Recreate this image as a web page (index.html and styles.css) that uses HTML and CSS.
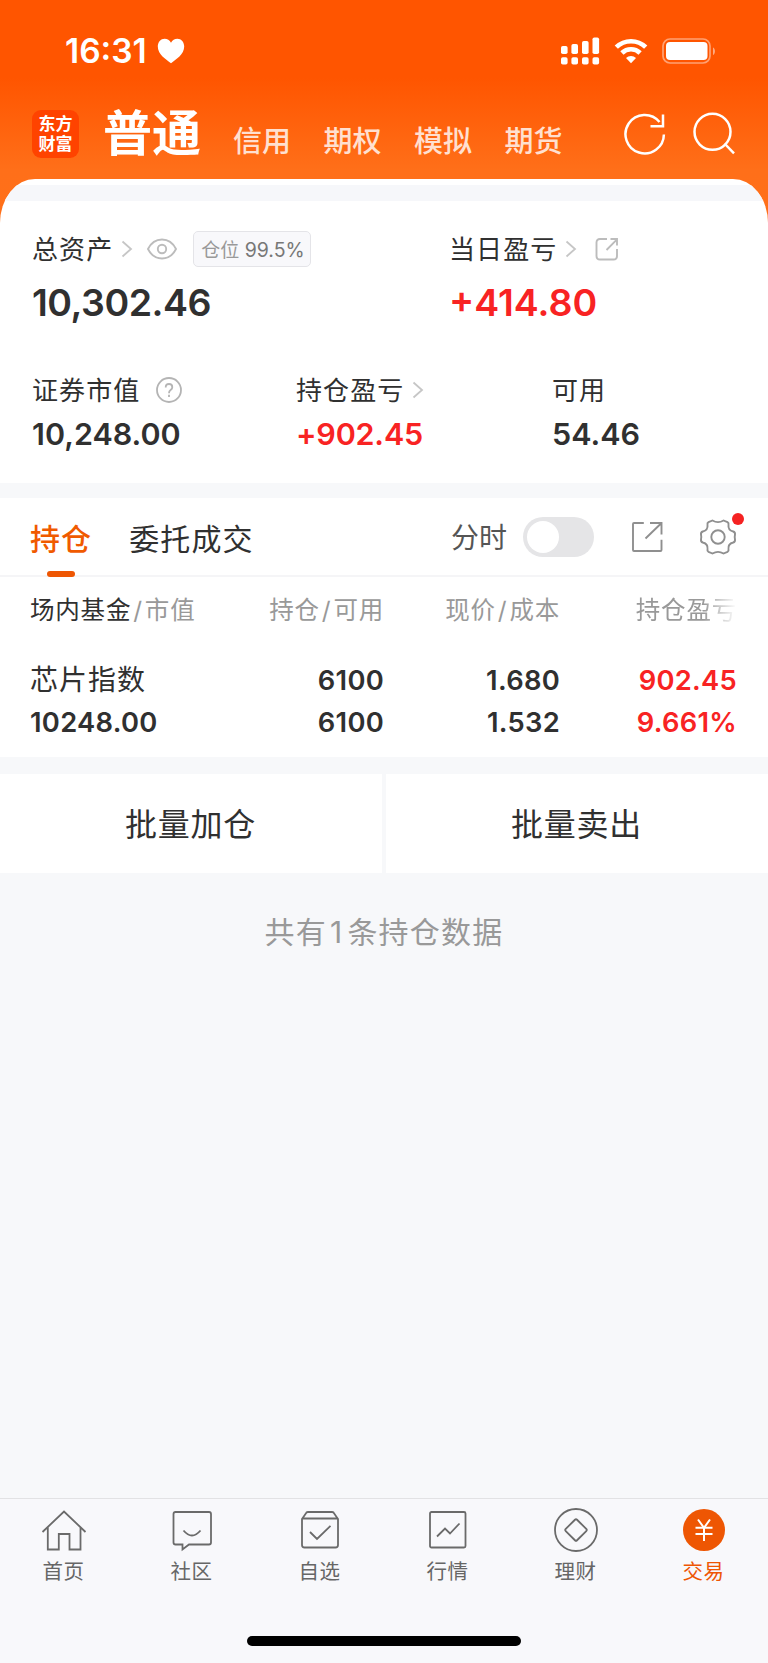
FILE: index.html
```html
<!DOCTYPE html>
<html lang="zh-CN">
<head>
<meta charset="utf-8">
<title>交易</title>
<link rel="stylesheet" href="styles.css">
</head>
<body>
<div class="app">
  <header class="top">
    <div class="status">
      <span class="time">16:31</span>
      <svg class="heart" width="28" height="26" viewBox="0 0 28 26"><path d="M14 25.200C9 21.500 .8 16.500 .8 8.600C.8 4 3.800 .8 7.600 .8C10.300 .8 12.700 2.200 14 4.700C15.300 2.200 17.700 .8 20.400 .8C24.200 .8 27.200 4 27.200 8.600C27.200 16.500 19 21.500 14 25.200Z" fill="#fff"/></svg>
      <span class="spacer"></span>
      <svg class="signal" width="39" height="28" viewBox="0 0 39 28" fill="#fff"><rect x="0" y="9" width="6.600" height="8" rx="1.800"/><rect x="10.400" y="7" width="6.600" height="10" rx="1.800"/><rect x="21" y="4" width="6.600" height="13" rx="1.800"/><rect x="31.500" y="0.500" width="6.600" height="16.500" rx="1.800"/><rect x="0" y="20.300" width="6.600" height="7.200" rx="1.800"/><rect x="10.400" y="20.300" width="6.600" height="7.200" rx="1.800"/><rect x="21" y="20.300" width="6.600" height="7.200" rx="1.800"/><rect x="31.500" y="20.300" width="6.600" height="7.200" rx="1.800"/></svg>
      <svg class="wifi" width="34" height="26" viewBox="0 0 34 26" fill="none" stroke="#fff" stroke-width="4.600"><path d="M2.300 9.200A21 21 0 0 1 31.700 9.200"/><path d="M7.900 15A13 13 0 0 1 26.100 15"/><path d="M17 25.200L12 20A7.200 7.200 0 0 1 22 20Z" fill="#fff" stroke="none"/></svg>
      <svg class="battery" width="54" height="26" viewBox="0 0 54 26"><rect x="1" y="1" width="47" height="24" rx="7" fill="none" stroke="#fff" stroke-opacity=".45" stroke-width="1.700"/><rect x="4" y="4" width="41.500" height="18" rx="4" fill="#fff"/><path d="M51 9.500C53.600 10.500 53.600 16 51 17Z" fill="#fff" fill-opacity=".5"/></svg>
    </div>
    <nav class="accounts">
      <div class="logo"><span>东方</span><span>财富</span></div>
      <span class="account-on">普通</span>
      <div class="account-list"><span>信用</span><span>期权</span><span>模拟</span><span>期货</span></div>
      <span class="spacer"></span>
      <svg class="refresh" width="44" height="44" viewBox="0 0 44 44" fill="none" stroke="#fff" stroke-width="2.500"><path d="M40.900 22.500A19.200 19.200 0 1 1 36.500 10"/><path d="M40 2.500V14.300H27.500"/></svg>
      <svg class="search" width="44" height="44" viewBox="0 0 44 44" fill="none" stroke="#fff" stroke-width="2.500"><circle cx="20.500" cy="19.800" r="18"/><path d="M32.500 31.500L42 41.300"/></svg>
    </nav>
  </header>

  <section class="assets">
    <div class="strip"></div>
    <div class="totals">
      <div class="total-main">
        <div class="label"><span>总资产</span><svg class="chev" width="12" height="18" viewBox="0 0 12 18"><path d="M1.500 1.500L10 9L1.500 16.500"/></svg><svg class="eye" width="30" height="22" viewBox="0 0 30 22"><path d="M1 11C4 5 9 1.500 15 1.500S26 5 29 11C26 17 21 20.500 15 20.500S4 17 1 11Z"/><circle cx="15" cy="11" r="4.200"/></svg><span class="badge">仓位 <b>99.5%</b></span></div>
        <div class="big tight">10,302.46</div>
      </div>
      <div class="total-day">
        <div class="label"><span>当日盈亏</span><svg class="chev" width="12" height="18" viewBox="0 0 12 18"><path d="M1.500 1.500L10 9L1.500 16.500"/></svg><svg class="share-sm" width="24" height="24" viewBox="0 0 24 24"><path d="M12 2H5Q1.500 2 1.500 5.500V19Q1.500 22.500 5 22.500H18.500Q22 22.500 22 19V12M11.500 13L21.500 2.800M15.500 2H22V8.500"/></svg></div>
        <div class="big up">+414.80</div>
      </div>
    </div>
    <div class="details">
      <div class="detail"><div class="label"><span>证券市值</span><svg class="help" width="26" height="26" viewBox="0 0 26 26"><circle cx="13" cy="13" r="12"/><path d="M9.700 10.500Q9.700 7 13 7T16.300 10.200Q16.300 11.800 14.600 13T13 16.300M13 17.800V20"/></svg></div><div class="val">10,248.00</div></div>
      <div class="detail"><div class="label"><span>持仓盈亏</span><svg class="chev" width="12" height="18" viewBox="0 0 12 18"><path d="M1.500 1.500L10 9L1.500 16.500"/></svg></div><div class="val up">+902.45</div></div>
      <div class="detail"><div class="label"><span>可用</span></div><div class="val">54.46</div></div>
    </div>
  </section>

  <section class="holdings">
    <div class="tabs">
      <span class="tab tab-on">持仓</span>
      <span class="tab">委托成交</span>
      <span class="spacer"></span>
      <span class="minute">分时</span>
      <span class="toggle"><i></i></span>
      <svg class="share" width="32" height="32" viewBox="0 0 32 32"><path d="M12.800 2H3Q2 2 2 3V29Q2 30 3 30H29.500Q30.500 30 30.500 29V18.800M14.500 17.500L30 2.500M19 2H30.500V13.500"/></svg>
      <span class="gear"><svg width="38" height="38" viewBox="-19 -19 38 38"><path d="M-5.500 -16.500Q0 -13.200 5.500 -16.500L9.500 -14.800Q11 -14 10.500 -12Q9.800 -7 15.200 -5.500Q17.300 -4.800 17 -2.500Q16.400 0 17 2.500Q17.300 4.800 15.200 5.500Q9.800 7 10.500 12Q11 14 9.500 14.800L5.500 16.500Q0 13.200 -5.500 16.500L-9.500 14.800Q-11 14 -10.500 12Q-9.800 7 -15.200 5.500Q-17.300 4.800 -17 2.500Q-16.400 0 -17 -2.500Q-17.300 -4.800 -15.200 -5.500Q-9.800 -7 -10.500 -12Q-11 -14 -9.500 -14.800Z"/><circle cx="0" cy="0" r="6.700"/></svg><i class="dot"></i></span>
    </div>
    <div class="row head"><span class="c1"><em>场内基金</em><u>/</u>市值</span><span class="c2">持仓<u>/</u>可用</span><span class="c3">现价<u>/</u>成本</span><span class="c4 fade">持仓盈亏</span></div>
    <div class="position">
      <div class="row"><span class="c1 name">芯片指数</span><span class="c2">6100</span><span class="c3">1.680</span><span class="c4 up">902.45</span></div>
      <div class="row"><span class="c1">10248.00</span><span class="c2">6100</span><span class="c3">1.532</span><span class="c4 up">9.661%</span></div>
    </div>
  </section>

  <div class="actions"><div>批量加仓</div><div>批量卖出</div></div>
  <p class="count">共有<span>1</span>条持仓数据</p>

  <footer class="bar">
    <nav class="bar-items">
      <div class="item"><svg width="46" height="46" viewBox="0 0 46 46"><path d="M1.500 25L23 4.500L44.500 25M6.800 20.500V42.500H17.800V27H28.500V42.500H39.500V20.500"/></svg><span>首页</span></div>
      <div class="item"><svg width="46" height="46" viewBox="0 0 46 46"><path d="M6.500 5H40Q42 5 42 7V35.500Q42 37.500 40 37.500H20L13.500 42.500V37.500H6.500Q4.500 37.500 4.500 35.500V7Q4.500 5 6.500 5ZM14.500 23.500Q23 33.500 31.500 23.500"/></svg><span>社区</span></div>
      <div class="item"><svg width="46" height="46" viewBox="0 0 46 46"><path d="M5 12L9.500 5.500Q10 5 11 5H35Q36 5 36.500 5.500L41 12V38Q41 40.500 38.500 40.500H7.500Q5 40.500 5 38ZM5 11.500H41M13 25L20 32L33.500 18.800"/></svg><span>自选</span></div>
      <div class="item"><svg width="46" height="46" viewBox="0 0 46 46"><rect x="5" y="5" width="35.500" height="35.500" rx="1.500"/><path d="M12 29.500L20 21.500L25 26.500L34.500 16.500"/></svg><span>行情</span></div>
      <div class="item"><svg width="46" height="46" viewBox="0 0 46 46"><circle cx="23" cy="23" r="21"/><rect x="15" y="15" width="16" height="16" rx="1.500" transform="rotate(45 23 23)"/></svg><span>理财</span></div>
      <div class="item item-on"><svg width="46" height="46" viewBox="0 0 46 46"><circle cx="23" cy="23" r="21" class="coin"/><path class="yen" d="M17 12.500L23 20.800L29 12.500M14.500 20.800H31.500M14.500 27H31.500M23 20.800V34"/></svg><span>交易</span></div>
    </nav>
    <div class="home"></div>
  </footer>
</div>
</body>
</html>
```

FILE: styles.css
```css
* { box-sizing: border-box; }
body {
  margin: 0;
  width: 768px;
  background: #f7f8fa;
  color: #303030;
  font-family: Inter, "Noto Sans CJK SC", sans-serif;
}
svg { display: block; flex: none; }
.app { height: 1663px; display: flex; flex-direction: column; overflow: hidden; }
.spacer { flex: 1; }
.up { color: #f82323; }

.top {
  flex: none;
  height: 224px;
  background: linear-gradient(#ff5500 0, #ff5500 78px, #ff6f19 170px, #ff7019 100%);
  color: #fff;
}
.status { display: flex; align-items: center; height: 102px; padding: 0 52px 0 65px; }
.time { font-size: 33.5px; font-weight: 600; line-height: 40px; width: 92px; }
.signal { margin-right: 14px; }
.wifi { margin-right: 14px; }
.accounts { display: flex; align-items: center; height: 64px; padding: 0 32px; }
.logo {
  width: 47px; height: 48px; border-radius: 9px; background: #ff4300;
  display: flex; flex-direction: column; align-items: center; justify-content: center;
  font-size: 17px; line-height: 20px; font-weight: 700;
}
.account-on { margin-left: 24px; font-size: 49px; line-height: 60px; font-weight: 600; }
.account-list {
  display: flex; gap: 32.5px; margin-left: 32px; padding-top: 16px;
  font-size: 29px; line-height: 36px; font-weight: 500; color: #ffe0d0;
}
.refresh { margin-right: 25px; }

.assets {
  flex: none;
  height: 304px; margin-top: -45px;
  background: #fff;
  border-radius: 35px 35px 0 0 / 44px 44px 0 0;
  overflow: hidden;
  padding-top: 6px;
}
.strip { height: 16px; background: #f6f7fa; }
.totals { display: flex; padding: 28px 32px 0; }
.total-main { width: 417px; }
.label { display: flex; align-items: center; height: 40px; font-size: 26px; letter-spacing: 1.1px; }
.label > span:first-child { padding-bottom: 3px; }
.chev { margin-left: 8px; fill: none; stroke: #c6c6c6; stroke-width: 1.8; }
.eye { margin-left: 14px; fill: none; stroke: #bcbcbc; stroke-width: 1.9; }
.share-sm { margin-left: 18px; fill: none; stroke: #bcbcbc; stroke-width: 1.9; }
.help { margin-left: 16px; fill: none; stroke: #b4b4b4; stroke-width: 1.8; }
.badge {
  margin-left: 16px; width: 118px; height: 36px; line-height: 36px; padding-left: 7px;
  border: 1px solid #e4e4e8; border-radius: 5px; background: #f8f8fb;
  font-size: 19px; letter-spacing: 0; color: #999; white-space: nowrap;
}
.badge b { font-weight: 400; font-size: 19.5px; color: #777; }
.big { height: 66px; line-height: 68px; font-size: 37.5px; font-weight: 600; }
.tight { letter-spacing: -.5px; }
.details { display: flex; padding: 35px 32px 0; }
.detail { flex: none; width: 264px; }
.detail:nth-child(2) { width: 256px; }
.val { height: 48px; line-height: 48px; font-size: 30.5px; font-weight: 600; }
.val.up { letter-spacing: -.2px; }

.holdings { flex: none; height: 259px; margin-top: 15px; background: #fff; }
.tabs { display: flex; align-items: center; height: 79px; padding: 1px 30px 0; border-bottom: 2px solid #f5f5f7; }
.tab { font-size: 30px; letter-spacing: 1.1px; margin-right: 37px; height: 77px; line-height: 80px; position: relative; }
.tab-on { color: #f05a00; font-weight: 500; }
.tab-on::after {
  content: ""; position: absolute; left: 17px; bottom: -1px;
  width: 28px; height: 6px; border-radius: 3px; background: #ee5603;
}
.minute { font-size: 28px; line-height: 40px; padding-top: 2px; color: #555; }
.toggle { width: 71px; height: 40px; border-radius: 20px; background: #e5e5e7; margin-left: 16px; padding: 4px; }
.toggle i { display: block; width: 32px; height: 32px; border-radius: 50%; background: #fff; }
.share { margin-left: 37px; fill: none; stroke: #8f8f8f; stroke-width: 1.9; }
.gear { position: relative; margin: 0 1px 0 36px; }
.gear svg { fill: none; stroke: #8f8f8f; stroke-width: 1.9; }
.dot { position: absolute; left: 33px; top: -5px; width: 12px; height: 12px; border-radius: 50%; background: #f52222; }
.row {
  display: grid; grid-template-columns: 201px 153px 176px 177px;
  padding: 0 31px 0 30px; height: 42px; line-height: 43px;
  font-size: 27.3px; font-weight: 600; letter-spacing: .3px;
}
.c2, .c3, .c4 { text-align: right; white-space: nowrap; }
.head { height: 65px; line-height: 66px; font-size: 24.5px; font-weight: 400; letter-spacing: .8px; color: #999; }
.head em { font-style: normal; color: #303030; }
.head u { text-decoration: none; margin: 0 2px; }
.fade { -webkit-mask-image: linear-gradient(90deg, #000 calc(100% - 34px), transparent); mask-image: linear-gradient(90deg, #000 calc(100% - 34px), transparent); }
.position { padding-top: 17px; }
.position .row + .row { line-height: 44px; }
.name { font-size: 28px; font-weight: 400; letter-spacing: 1px; }

.actions { flex: none; display: grid; grid-template-columns: 1fr 1fr; gap: 4px; margin-top: 17px; }
.actions div { height: 99px; line-height: 101px; padding-right: 1px; background: #fff; text-align: center; font-size: 32px; letter-spacing: .7px; }
.count { margin: 39px 0 0; line-height: 40px; text-align: center; font-size: 30px; letter-spacing: 1.2px; color: #999; }
.count span { margin: 0 4px 0 3px; }

.bar { flex: none; margin-top: auto; height: 165px; border-top: 1px solid #e2e2e4; background: #f8f8fb; }
.bar-items { display: grid; grid-template-columns: repeat(6, 1fr); padding-top: 8px; }
.item { display: flex; flex-direction: column; align-items: center; padding-right: 1px; font-size: 20.5px; letter-spacing: .6px; line-height: 30px; color: #666; }
.item svg { fill: none; stroke: #6a6a6a; stroke-width: 1.8; margin-bottom: 4px; }
.item-on { color: #ee5603; }
.item .coin { fill: #ee5603; stroke: none; }
.item .yen { stroke: #fff; stroke-width: 2; }
.home { width: 274px; height: 10px; border-radius: 5px; background: #000; margin: 49px auto 0; }
```
